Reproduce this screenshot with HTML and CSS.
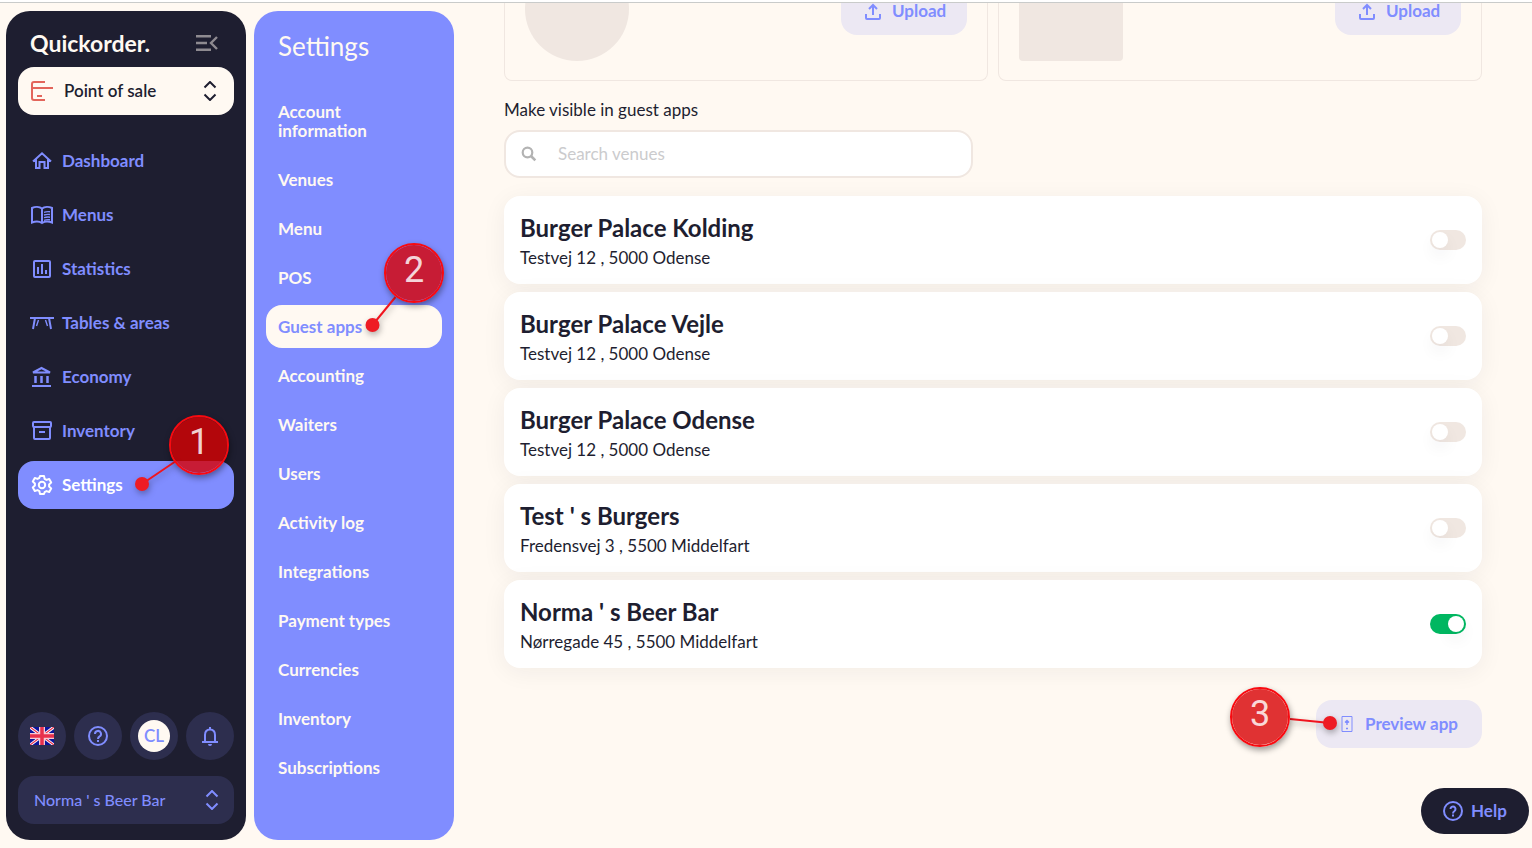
FILE: index.html
```html
<!DOCTYPE html>
<html lang="en">
<head>
<meta charset="utf-8">
<title>Quickorder – Guest apps</title>
<meta name="viewport" content="width=device-width, initial-scale=1">
<link rel="stylesheet" href="styles.css">
</head>
<body>
<div class="app">
  <aside class="sidebar">
    <div class="brand">
      <span class="brand-name">Quickorder.</span>
      <button class="collapse" type="button" aria-label="Collapse menu">
        <svg width="22" height="16" viewBox="0 0 22 16" fill="none" stroke="currentColor" stroke-width="2.400"><path d="M0 1.300h15M0 8h11M0 14.700h15M21 2l-6 6 6 6"/></svg>
      </button>
    </div>
    <button class="selector selector-light" type="button">
      <svg width="24" height="24" viewBox="0 0 24 24" fill="none" stroke="#e3655b" stroke-width="2"><path d="M14 4V3H4Q2 3 2 5v14q0 2 2 2h10v-1M2 9h20v1M7 17h5"/></svg>
      <span class="selector-text">Point of sale</span>
      <svg width="14" height="20" viewBox="0 0 14 20" fill="none" stroke="currentColor" stroke-width="2"><path d="M1.500 6.500 7 1l5.500 5.500M1.500 13.500 7 19l5.500-5.500"/></svg>
    </button>
    <nav class="nav" aria-label="Main">
      <a class="nav-link" href="#"><svg width="24" height="24" viewBox="0 0 24 24" fill="none" stroke="currentColor" stroke-width="2"><path d="M3 12.500 12 4.300l9 8.200M6 10.500V19h3.500v-6h5v6H18v-8.500"/></svg>Dashboard</a>
      <a class="nav-link" href="#"><svg width="24" height="24" viewBox="0 0 24 24" fill="none" stroke="currentColor" stroke-width="2"><path d="M12 5.500C9.500 3.600 5 3.600 2 5v14.500c3-1.200 7.500-1.200 10 .5 2.500-1.700 7-1.700 10-.5V5c-3-1.400-7.500-1.400-10 .5V20"/><path stroke-width="1.400" d="M14 9.300q3-1 6-.5M14 12q3-1 6-.5M14 14.700q3-1 6-.5M14 17.300q3-1 6-.5"/></svg>Menus</a>
      <a class="nav-link" href="#"><svg width="24" height="24" viewBox="0 0 24 24" fill="none" stroke="currentColor" stroke-width="2"><rect x="4" y="4" width="16" height="16" rx="1"/><path d="M8 10v7M12 7v10M16 13v4"/></svg>Statistics</a>
      <a class="nav-link" href="#"><svg width="24" height="24" viewBox="0 0 24 24" fill="none" stroke="currentColor" stroke-width="2"><path d="M0 7h24M5 7 3 18M19 7l2 11"/><path stroke-width="1.400" d="M8.500 9 6.500 15M15.500 9l2 6"/></svg>Tables &amp; areas</a>
      <a class="nav-link" href="#"><svg width="24" height="24" viewBox="0 0 24 24" fill="none" stroke="currentColor" stroke-width="2"><path d="M3 7.500 11.500 3 20 7.500zM2 21h19"/><path stroke-width="2.500" d="M5.500 11v7M11.500 11v7M17.500 11v7"/></svg>Economy</a>
      <a class="nav-link" href="#"><svg width="24" height="24" viewBox="0 0 24 24" fill="none" stroke="currentColor" stroke-width="2"><rect x="3" y="3" width="18" height="5" rx="1"/><path d="M4 8v11q0 1 1 1h14q1 0 1-1V8M9 13h6"/></svg>Inventory</a>
      <a class="nav-link nav-link-active" href="#" aria-current="page"><svg width="24" height="24" viewBox="0 0 24 24" fill="none" stroke="currentColor" stroke-width="2" stroke-linejoin="round"><path d="M10 3h4l.6 2.800 1.900 1.100 2.700-.9 2 3.500-2.100 1.900v2.200l2.100 1.900-2 3.500-2.700-.9-1.900 1.100L14 21h-4l-.6-2.800-1.900-1.100-2.700.9-2-3.500 2.100-1.900v-2.200L2.800 8.500l2-3.500 2.700.9 1.900-1.100z"/><circle cx="12" cy="12" r="3.200"/></svg>Settings
        <span class="marker marker-one"><svg class="marker-pointer" width="100" height="80" viewBox="0 0 100 80"><path class="marker-line" d="M7 69 41 46"/><circle class="marker-dot" cx="7" cy="69" r="7"/></svg><span class="marker-disc">1</span></span>
      </a>
    </nav>
    <div class="quick">
      <button class="round" type="button" aria-label="Language: English">
        <svg width="24" height="18" viewBox="0 0 24 18"><path fill="#0b149c" d="M0 0h24v18H0z"/><path stroke="#fff" stroke-width="3" d="m0 0 24 18M24 0 0 18"/><path stroke="#e8304c" stroke-width="1.200" d="m0 0 24 18M24 0 0 18"/><path stroke="#f6c9d4" stroke-width="6" d="M12 0v18M0 9h24"/><path stroke="#e8304c" stroke-width="3.500" d="M12 0v18M0 9h24"/></svg>
      </button>
      <button class="round" type="button" aria-label="Help">
        <svg width="24" height="24" viewBox="0 0 24 24" fill="none" stroke="currentColor" stroke-width="2"><circle cx="12" cy="12" r="9"/><path d="M9 10a3 3 0 1 1 4.500 2.500Q12 13.300 12 15M12 16v2"/></svg>
      </button>
      <button class="round" type="button" aria-label="Account CL"><span class="avatar">CL</span></button>
      <button class="round" type="button" aria-label="Notifications">
        <svg width="24" height="24" viewBox="0 0 24 24" fill="none" stroke="currentColor" stroke-width="2"><path d="M4 18h16M7 18v-7q0-5.500 5-5.500t5 5.500v7M12 3v2"/><path fill="currentColor" stroke="none" d="M10 20h4q0 2-2 2t-2-2"/></svg>
      </button>
    </div>
    <button class="selector selector-dark" type="button">
      <span class="selector-text">Norma ' s Beer Bar</span>
      <svg width="14" height="20" viewBox="0 0 14 20" fill="none" stroke="currentColor" stroke-width="2"><path d="M1.500 6.500 7 1l5.500 5.500M1.500 13.500 7 19l5.500-5.500"/></svg>
    </button>
  </aside>

  <nav class="panel" aria-label="Settings">
    <h1 class="panel-title">Settings</h1>
    <div class="panel-list">
      <a class="panel-link" href="#">Account information</a>
      <a class="panel-link" href="#">Venues</a>
      <a class="panel-link" href="#">Menu</a>
      <a class="panel-link" href="#">POS</a>
      <a class="panel-link panel-link-active" href="#" aria-current="page">Guest apps
        <span class="marker marker-two"><svg class="marker-pointer" width="90" height="100" viewBox="0 0 90 100"><path class="marker-line" d="M12.500 85 35.500 57"/><circle class="marker-dot" cx="12.500" cy="85" r="7"/></svg><span class="marker-disc">2</span></span>
      </a>
      <a class="panel-link" href="#">Accounting</a>
      <a class="panel-link" href="#">Waiters</a>
      <a class="panel-link" href="#">Users</a>
      <a class="panel-link" href="#">Activity log</a>
      <a class="panel-link" href="#">Integrations</a>
      <a class="panel-link" href="#">Payment types</a>
      <a class="panel-link" href="#">Currencies</a>
      <a class="panel-link" href="#">Inventory</a>
      <a class="panel-link" href="#">Subscriptions</a>
    </div>
  </nav>

  <main class="content">
    <div class="uploads">
      <section class="upload-card">
        <div class="thumb thumb-round"></div>
        <button class="soft-button upload-button" type="button"><svg width="16" height="17" viewBox="0 0 16 17" fill="none" stroke="currentColor" stroke-width="2"><path d="M8 12V2M4 6l4-4 4 4M1 11v4q0 1 1 1h12q1 0 1-1v-4"/></svg>Upload</button>
      </section>
      <section class="upload-card">
        <div class="thumb"></div>
        <button class="soft-button upload-button" type="button"><svg width="16" height="17" viewBox="0 0 16 17" fill="none" stroke="currentColor" stroke-width="2"><path d="M8 12V2M4 6l4-4 4 4M1 11v4q0 1 1 1h12q1 0 1-1v-4"/></svg>Upload</button>
      </section>
    </div>
    <label class="search-label" for="venue-search">Make visible in guest apps</label>
    <div class="search">
      <svg width="16" height="16" viewBox="0 0 16 16" fill="none" stroke="#b3b3b3"><circle cx="6.500" cy="6.500" r="4.800" stroke-width="2.200"/><path stroke-width="2.600" d="m10 10 4.300 4.300"/></svg>
      <input class="search-input" id="venue-search" type="text" placeholder="Search venues">
    </div>
    <div class="venues">
      <label class="venue"><span class="venue-info"><span class="venue-name">Burger Palace Kolding</span><span class="venue-address">Testvej 12 , 5000 Odense</span></span><input class="toggle" type="checkbox"></label>
      <label class="venue"><span class="venue-info"><span class="venue-name">Burger Palace Vejle</span><span class="venue-address">Testvej 12 , 5000 Odense</span></span><input class="toggle" type="checkbox"></label>
      <label class="venue"><span class="venue-info"><span class="venue-name">Burger Palace Odense</span><span class="venue-address">Testvej 12 , 5000 Odense</span></span><input class="toggle" type="checkbox"></label>
      <label class="venue"><span class="venue-info"><span class="venue-name">Test ' s Burgers</span><span class="venue-address">Fredensvej 3 , 5500 Middelfart</span></span><input class="toggle" type="checkbox"></label>
      <label class="venue"><span class="venue-info"><span class="venue-name">Norma ' s Beer Bar</span><span class="venue-address">Nørregade 45 , 5500 Middelfart</span></span><input class="toggle" type="checkbox" checked></label>
    </div>
    <button class="soft-button preview-button" type="button">
      <svg width="12" height="16" viewBox="0 0 12 16" fill="none" stroke="currentColor"><path d="M1 .5h10v15H1z"/><path d="M6 9V4.500M4 6.500l2-2 2 2" stroke-width="1.400"/><path stroke-width="1.500" d="M5 12.500h2"/></svg>Preview app
      <span class="marker marker-three"><svg class="marker-pointer" width="120" height="80" viewBox="0 0 120 80"><path class="marker-line" d="m60 39 40 4"/><circle class="marker-dot" cx="100" cy="43" r="7"/></svg><span class="marker-disc">3</span></span>
    </button>
  </main>
</div>
<button class="help" type="button"><svg width="24" height="24" viewBox="0 0 24 24" fill="none" stroke="currentColor" stroke-width="2"><circle cx="12" cy="12" r="9"/><path d="M9.500 10a2.500 2.500 0 1 1 4 2Q12 13 12 14.500M12 15.500v2"/></svg>Help</button>
</body>
</html>
```
FILE: styles.css
```css
* { box-sizing: border-box; }

:root {
  --ink: #1e1e30;
  --ink-soft: #2d2e4e;
  --violet: #808dff;
  --cream: #fff9f2;
  --sand: #f0e7e1;
  --lilac: #ece8f3;
}

body {
  margin: 0;
  background: var(--cream);
  color: var(--ink);
  font: 400 17px/20px Lato, "Liberation Sans", sans-serif;
}

button, input { font: inherit; color: inherit; }
button { border: 0; background: none; padding: 0; cursor: pointer; }
a { color: inherit; text-decoration: none; }
svg { flex: none; }

.app {
  display: flex;
  min-height: 100vh;
  gap: 8px;
  padding: 0 50px 8px 6px;
  border-top: 2px solid #fff;
  box-shadow: inset 0 1px #c9cbca;
}

.sidebar {
  flex: none;
  display: flex;
  flex-direction: column;
  width: 240px;
  margin-top: 9px;
  padding: 8px 12px 16px;
  border-radius: 24px;
  background: var(--ink);
  color: var(--violet);
}

.brand {
  display: flex;
  align-items: center;
  justify-content: space-between;
  height: 48px;
  padding: 0 16px 0 12px;
}

.brand-name {
  color: var(--cream);
  font-size: 23px;
  line-height: 28px;
  font-weight: 700;
}

.collapse { display: flex; color: #8e8a90; }

.selector {
  display: flex;
  align-items: center;
  width: 100%;
  height: 48px;
  border-radius: 16px;
  text-align: left;
}

.selector-text { flex: 1; }

.selector-light {
  gap: 10px;
  padding: 0 17px 0 12px;
  background: var(--cream);
  color: var(--ink);
  font-weight: 600;
}

.selector-dark {
  padding: 0 15px 0 16px;
  background: var(--ink-soft);
  font-size: 16px;
  font-weight: 500;
}

.nav {
  display: flex;
  flex-direction: column;
  gap: 6px;
  margin: 22px 0 auto;
}

.nav-link {
  position: relative;
  display: flex;
  align-items: center;
  gap: 8px;
  height: 48px;
  padding: 0 12px;
  border-radius: 16px;
  font-weight: 700;
}

.nav-link-active { background: var(--violet); color: #fff; }

.quick {
  display: flex;
  justify-content: space-between;
  margin: 16px 0;
}

.round {
  display: grid;
  place-items: center;
  width: 48px;
  height: 48px;
  border-radius: 50%;
  background: var(--ink-soft);
}

.avatar {
  display: grid;
  place-items: center;
  width: 32px;
  height: 32px;
  border-radius: 50%;
  background: var(--cream);
  font-weight: 600;
}

.panel {
  flex: none;
  width: 200px;
  margin-top: 9px;
  padding: 19px 12px;
  border-radius: 24px;
  background: var(--violet);
  color: var(--cream);
}

.panel-title {
  margin: 0 12px 28px;
  font-size: 26px;
  line-height: 32px;
  font-weight: 400;
}

.panel-list { display: flex; flex-direction: column; gap: 6px; }

.panel-link {
  position: relative;
  padding: 12px 32px 12px 12px;
  border-radius: 16px;
  font-weight: 700;
  line-height: 19px;
}

.panel-link-active { background: var(--cream); color: var(--violet); }

.content {
  flex: 1;
  display: flex;
  flex-direction: column;
  min-width: 0;
  margin-left: 42px;
  padding-top: 1px;
}

.uploads { display: grid; grid-template-columns: 1fr 1fr; gap: 10px; }

.upload-card {
  display: flex;
  align-items: flex-end;
  justify-content: space-between;
  height: 78px;
  padding: 0 20px 19px;
  overflow: hidden;
  border: 1px solid var(--sand);
  border-top: 0;
  border-radius: 0 0 8px 8px;
}

.thumb {
  width: 104px;
  height: 104px;
  border-radius: 4px;
  background: var(--sand);
}

.thumb-round { border-radius: 50%; }

.soft-button {
  display: flex;
  align-items: center;
  height: 48px;
  padding: 0 24px;
  border-radius: 16px;
  background: var(--lilac);
  color: var(--violet);
  font-weight: 700;
  line-height: 16px;
}

.upload-button {
  gap: 11px;
  width: 126px;
  margin-bottom: 26px;
}

.search-label { margin: 19px 0 10px; }

.search {
  display: flex;
  align-items: center;
  gap: 21px;
  width: 48%;
  height: 48px;
  padding: 0 15px;
  border: 2px solid var(--sand);
  border-radius: 16px;
  background: #fff;
}

.search-input {
  flex: 1;
  min-width: 0;
  border: 0;
  padding: 0;
  background: none;
  outline: 0;
}

.search-input::placeholder { color: #cbcbcd; opacity: 1; }

.venues { display: grid; gap: 8px; margin-top: 18px; }

.venue {
  display: flex;
  align-items: center;
  justify-content: space-between;
  height: 88px;
  padding: 0 16px;
  border-radius: 16px;
  background: #fff;
  box-shadow: 0 4px 24px rgba(30, 30, 48, 0.06);
}

.venue-info { display: grid; gap: 4px; }
.venue-name { font-size: 24px; line-height: 32px; font-weight: 700; }

.toggle {
  appearance: none;
  display: flex;
  width: 36px;
  height: 20px;
  margin: 0;
  padding: 2px;
  border-radius: 10px;
  background: var(--sand);
}

.toggle::before {
  content: "";
  width: 16px;
  height: 16px;
  border-radius: 50%;
  background: #fff;
  box-shadow: 0 8px 16px rgba(30, 30, 48, 0.06);
}

.toggle:checked { justify-content: flex-end; background: #00b761; }

.preview-button {
  position: relative;
  align-self: flex-end;
  justify-content: flex-end;
  gap: 12px;
  width: 166px;
  margin-top: 32px;
}

.help {
  position: fixed;
  right: 3px;
  bottom: 14px;
  display: flex;
  align-items: center;
  gap: 6px;
  width: 108px;
  height: 46px;
  padding: 0 20px;
  border-radius: 23px;
  background: var(--ink);
  color: var(--violet);
  font-weight: 700;
}

.marker {
  position: absolute;
  z-index: 1;
  pointer-events: none;
}

.marker-one { left: 117px; top: -46px; }
.marker-two { left: 94px; top: -65px; }
.marker-three { left: -86px; top: -20px; }

.marker-pointer {
  display: block;
  filter: drop-shadow(1px 3px 3px rgba(0, 0, 0, 0.3));
}

.marker-line { stroke: #f0141e; stroke-width: 2; }
.marker-dot { fill: #ee1c24; }

.marker-disc {
  position: absolute;
  left: 0;
  top: 7px;
  width: 60px;
  height: 60px;
  border: 2px solid #f80a10;
  border-radius: 50%;
  background: rgba(216, 0, 2, 0.8);
  background-clip: padding-box;
  box-shadow: 1px 3px 6px rgba(0, 0, 0, 0.4);
  color: rgba(255, 255, 255, 0.82);
  font: 400 36px/50px Roboto, "Liberation Sans", sans-serif;
  text-align: center;
}

.marker-one .marker-disc { left: 34px; top: 0; }
.marker-two .marker-disc { left: 24px; top: 3px; }
```
